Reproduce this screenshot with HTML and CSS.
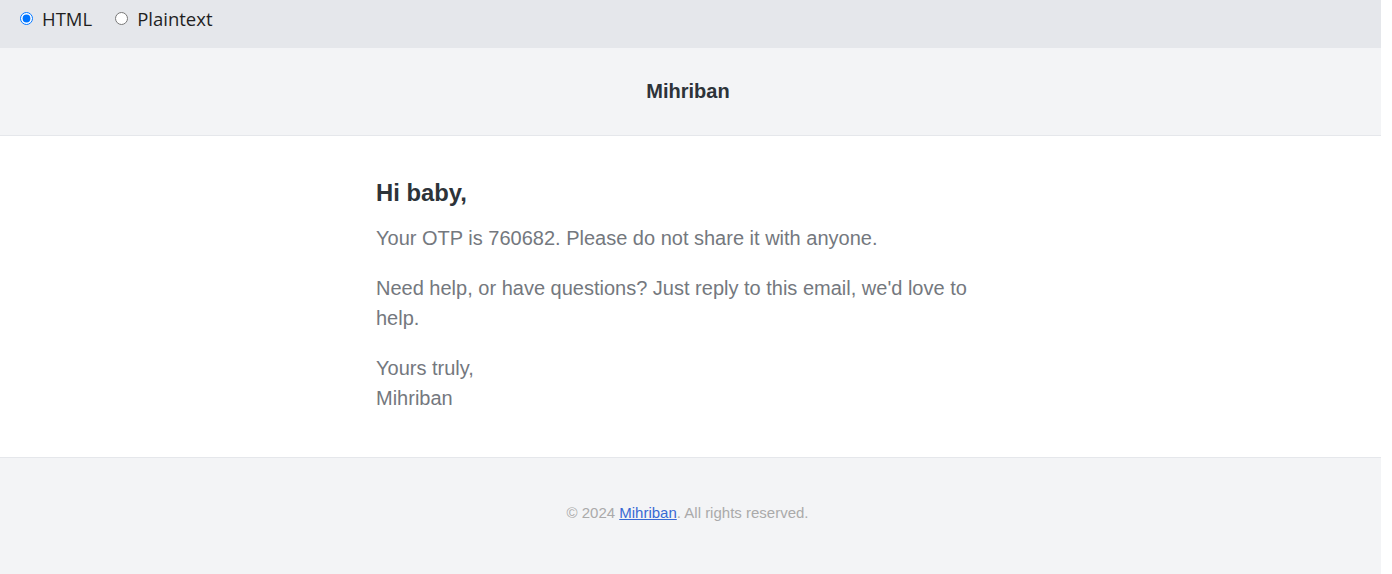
FILE: index.html
```html
<!DOCTYPE html>
<html>
<head>
<meta charset="utf-8">
<title>Mihriban</title>
<link rel="stylesheet" href="styles.css">
</head>
<body>
<div class="page">
  <div class="toolbar">
    <label class="opt"><input type="radio" name="fmt" checked> HTML</label>
    <label class="opt"><input type="radio" name="fmt"> Plaintext</label>
  </div>
  <div class="mail-header">Mihriban</div>
  <div class="mail-body">
    <div class="inner">
      <h1 class="greet">Hi baby,</h1>
      <p class="para">Your OTP is 760682. Please do not share it with anyone.</p>
      <p class="para">Need help, or have questions? Just reply to this email, we'd love to help.</p>
      <p class="para last">Yours truly,<br>Mihriban</p>
    </div>
  </div>
  <div class="mail-footer">© 2024 <a href="#" class="flink">Mihriban</a>. All rights reserved.</div>
</div>
</body>
</html>
```
FILE: styles.css
```css
html, body {
  margin: 0;
  padding: 0;
  background: #ffffff;
}
.page {
  width: 1381px;
  font-family: "Liberation Sans", Arial, sans-serif;
}
.toolbar {
  height: 48px;
  background: #e5e7eb;
  display: flex;
  align-items: flex-start;
  gap: 20px;
  padding-left: 17px;
  box-sizing: border-box;
  font-family: "Open Sans", "Noto Sans", sans-serif;
  font-size: 18.5px;
  color: #1f1f1f;
}
.opt {
  display: flex;
  align-items: center;
  gap: 9px;
  height: 36px;
}
.opt input {
  margin: 0 0 0 3px;
  width: 13px;
  height: 13px;
}
.mail-header {
  background: #f3f4f6;
  height: 88px;
  border-bottom: 1px solid #e5e7eb;
  box-sizing: border-box;
  display: flex;
  align-items: center;
  justify-content: center;
  font-weight: bold;
  font-size: 20px;
  color: #2d3339;
  padding-right: 5px;
}
.mail-body {
  background: #ffffff;
  padding: 42px 0 44px;
  border-bottom: 1px solid #e5e7eb;
}
.inner {
  width: 630px;
  margin: 0 auto;
  padding-left: 1px;
}
.greet {
  margin: 0 0 15px;
  font-size: 23.8px;
  line-height: 30px;
  font-weight: bold;
  color: #2d3339;
}
.para {
  margin: 0 0 20px;
  font-size: 20px;
  line-height: 30px;
  color: #74787e;
}
.para.last {
  margin-bottom: 0;
}
.mail-footer {
  background: #f3f4f6;
  padding: 44px 0 50px;
  text-align: center;
  font-size: 15px;
  line-height: 22px;
  color: #aaaaaa;
  padding-right: 6px;
}
.flink {
  color: #3869d4;
}
```
